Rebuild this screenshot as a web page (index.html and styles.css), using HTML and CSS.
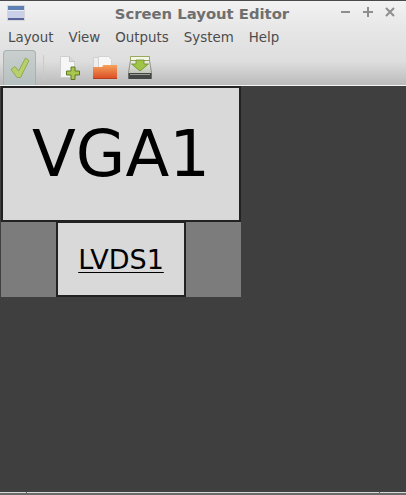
FILE: index.html
```html
<!DOCTYPE html>
<html lang="en">
<head>
  <meta charset="UTF-8">
  <title>Screen Layout Editor</title>
  <link rel="stylesheet" href="styles.css">
</head>
<body>
  <div class="window">
    <header class="titlebar">
      <svg class="win-icon" width="18" height="16" viewBox="0 0 18 16">
        <rect x="0.5" y="0.5" width="17" height="15" fill="#f0f0f2" stroke="#d4d6da"/>
        <rect x="1" y="1" width="16" height="14" fill="#c9cfe6"/>
        <rect x="1" y="1" width="16" height="4" fill="#5c7fb4"/>
        <rect x="1" y="5" width="16" height="1" fill="#e8ecf6"/>
        <rect x="1" y="13" width="16" height="2" fill="#59639a"/>
      </svg>
      <h1 class="title">Screen Layout Editor</h1>
      <div class="win-buttons">
        <svg width="12" height="12" viewBox="0 0 12 12"><path d="M1 6h9" stroke="#8e8e8e" stroke-width="2"/></svg>
        <svg width="12" height="12" viewBox="0 0 12 12"><path d="M1 6h10M6 1v10" stroke="#8e8e8e" stroke-width="2"/></svg>
        <svg width="12" height="12" viewBox="0 0 12 12"><path d="M2 2l8 8M10 2l-8 8" stroke="#8e8e8e" stroke-width="2"/></svg>
      </div>
    </header>

    <nav class="menubar">
      <span>Layout</span>
      <span>View</span>
      <span>Outputs</span>
      <span>System</span>
      <span>Help</span>
    </nav>

    <div class="toolbar">
      <button class="tool active" type="button">
        <svg width="20" height="22" viewBox="0 0 20 22">
          <path d="M1 12.500l4-3 3.500 4.500L15.500 1l3.500 2.500L10.500 20.500H7z" fill="#b7d06c" stroke="#93a956" stroke-width="1"/>
        </svg>
      </button>
      <div class="separator"></div>
      <button class="tool" type="button">
        <svg width="22" height="26" viewBox="0 0 22 26">
          <path d="M1.500 1.500h9l5 5v16h-14z" fill="#f6f6f6" stroke="#cfcfcf"/>
          <path d="M10.500 1.500v5h5" fill="#d8d8d8" stroke="#c4c4c4"/>
          <path d="M12 12h4v4h4.500v4H16v4.500h-4V20H7.500v-4H12z" fill="#a9c64e" stroke="#607a24"/>
        </svg>
      </button>
      <button class="tool" type="button">
        <svg width="24" height="24" viewBox="0 0 24 24">
          <defs>
            <linearGradient id="folder" x1="0" y1="0" x2="0" y2="1">
              <stop offset="0" stop-color="#f4a25c"/>
              <stop offset="1" stop-color="#dc4a22"/>
            </linearGradient>
          </defs>
          <path d="M0.500 1.500h7v10h-7z" fill="#eeeeee" stroke="#d2d2d2"/>
          <path d="M5.500 0.500h10l3 3v9h-13z" fill="#f7f7f7" stroke="#d2d2d2"/>
          <path d="M0 11h9l1.500-2H24v14H0z" fill="url(#folder)"/>
          <path d="M0 22.500h24" stroke="#b93f1c"/>
        </svg>
      </button>
      <button class="tool" type="button">
        <svg width="24" height="24" viewBox="0 0 24 24">
          <defs>
            <linearGradient id="drive" x1="0" y1="0" x2="0" y2="1">
              <stop offset="0" stop-color="#eff1e6"/>
              <stop offset="1" stop-color="#aeb2a6"/>
            </linearGradient>
          </defs>
          <path d="M2.500 4.500h19l2 12v6H0.500v-6z" fill="url(#drive)" stroke="#7c7f74" stroke-width="0.800"/>
          <path d="M0.500 17h23v6h-23z" fill="#444645"/>
          <path d="M2 18h20v1H2z" fill="#9a9c9a"/>
          <path d="M2.500 0.500h19v4h-19z" fill="#f4f6e8" stroke="#84983c" stroke-width="0.800"/>
          <path d="M8 4h8v4h4.500L12 15 3.500 8H8z" fill="#a0c546" stroke="#6d8a2a" stroke-width="0.800"/>
        </svg>
      </button>
    </div>

    <main class="canvas">
      <div class="screens">
        <div class="screen screen-big">VGA1</div>
        <div class="screen-row">
          <div class="screen screen-small">LVDS1</div>
        </div>
      </div>
    </main>

    <div class="statusbar">
      <span class="grip"></span>
      <span class="status-mid"></span>
      <span class="grip grip-end"></span>
    </div>
  </div>
</body>
</html>
```

FILE: styles.css
```css
/* Basic Styles */
html, body {
  margin: 0;
  padding: 0;
  height: 100%;
  background-color: #3f3f3f;
}

.window {
  width: 406px;
  height: 495px;
  display: flex;
  flex-direction: column;
  overflow: hidden;
  font-family: "DejaVu Sans", sans-serif;
  color: #4c4c4c;
  background: linear-gradient(#f2f2f2 0, #e6e6e6 30px, #dedede 60px, #b9b9b9 85px);
  border-top: 1px solid #4a4a4a;
  box-sizing: border-box;
}

/* Title bar */
.titlebar {
  height: 24px;
  display: flex;
  align-items: center;
  padding: 0 10px 0 7px;
}

.win-icon {
  flex: none;
}

.title {
  flex: 1;
  margin: 0;
  padding-left: 39px;
  text-align: center;
  font-size: 14.8px;
  font-weight: bold;
  color: #6f6f6f;
}

.win-buttons {
  display: flex;
  gap: 10px;
  margin-top: -2px;
}

/* Menu bar */
.menubar {
  height: 25px;
  display: flex;
  align-items: center;
  gap: 15px;
  padding: 0 8px;
  font-size: 13.4px;
}

/* Toolbar */
.toolbar {
  height: 35px;
  display: flex;
  align-items: center;
  padding: 0 3px;
}

.tool {
  width: 36px;
  height: 34px;
  margin: 0 -0.5px;
  padding: 0;
  display: flex;
  align-items: center;
  justify-content: center;
  background: none;
  border: 1px solid transparent;
}

.tool.active {
  width: 33px;
  height: 35px;
  margin: 0;
  background: linear-gradient(#c9cfcf, #b7c0c0);
  border: 1px solid #a9b0b0;
  border-bottom: 0;
  border-radius: 4px 4px 0 0;
}

.separator {
  width: 1px;
  height: 26px;
  margin: 0 8px 0 7px;
  background-color: #cacaca;
}

/* Canvas */
.canvas {
  flex: 1;
  background-color: #3f3f3f;
  border-top: 1px solid #f4f4f4;
  padding-left: 1px;
}

.screens {
  width: 240px;
  background-color: #7c7c7c;
}

.screen {
  box-sizing: border-box;
  display: flex;
  align-items: center;
  justify-content: center;
  background-color: #d9d9d9;
  border: 2px solid #222222;
  color: #000000;
}

.screen-big {
  height: 136px;
  font-size: 64px;
}

.screen-row {
  display: flex;
  justify-content: center;
  height: 75px;
}

.screen-small {
  width: 130px;
  height: 76px;
  margin-top: -1px;
  font-size: 27px;
  text-decoration: underline;
  text-decoration-thickness: 1px;
  text-underline-offset: 3px;
}

/* Bottom edge */
.statusbar {
  height: 3px;
  display: flex;
  gap: 1px;
  background-color: #6a6a6a;
}

.statusbar span {
  border-top: 1px solid #d8d8d8;
}

.grip {
  width: 26px;
}

.status-mid {
  flex: 1;
}
```
